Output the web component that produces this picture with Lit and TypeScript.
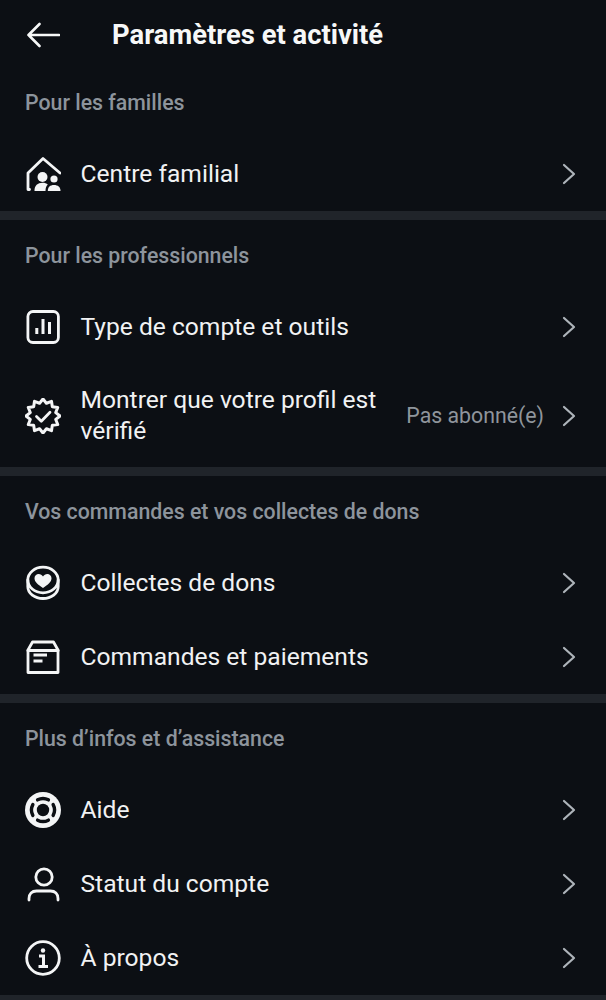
import { LitElement, html, css, svg } from "lit";
import { customElement } from "lit/decorators.js";

const FG = "#f4f5f6";
const BG = "#0c0f14";
const S = (inner: unknown) => html`<svg class="ic" viewBox="0 0 36 36" fill="none" stroke="${FG}" stroke-width="2.8" stroke-linecap="round" stroke-linejoin="round">${inner}</svg>`;

const seal = (() => {
  const pts: string[] = [];
  const n = 12;
  for (let i = 0; i < n * 2; i++) {
    const r = i % 2 === 0 ? 17 : 13.2;
    const a = (Math.PI * i) / n - Math.PI / 2;
    pts.push(`${(18 + r * Math.cos(a)).toFixed(2)},${(18 + r * Math.sin(a)).toFixed(2)}`);
  }
  return pts.join(" ");
})();

const icons = {
  family: S(svg`<path d="M4.500 33.500H3V17L18 2.500 35 17"/><circle cx="17.500" cy="21" r="5" fill="${FG}" stroke="none"/><path d="M9.500 35c0-5.500 3.200-8.200 8-8.200 2.300 0 4 .6 5.300 1.700-1.600 1.500-2.300 3.600-2.300 6.500z" fill="${FG}" stroke="none"/><circle cx="29" cy="23" r="3.600" fill="${FG}" stroke="none"/><path d="M22.800 35c0-4 2.300-6 6.200-6s6.500 2 6.500 6z" fill="${FG}" stroke="none"/>`),
  chart: S(svg`<rect x="2.900" y="2.500" width="30.500" height="31" rx="5"/><path d="M11.800 19v6M18 10v15M24.500 13v12" stroke-width="3" stroke-linecap="butt"/>`),
  badge: S(svg`<polygon points="${seal}" stroke-width="3"/><path d="M11.500 18.500l4.800 4.800 8.700-9"/>`),
  coin: S(svg`<ellipse cx="18" cy="15" rx="15.200" ry="12.800"/><path d="M2.800 15v6.500c0 7 7 12 15.200 12s15.200-5 15.200-12V15"/><path d="M18 23c-5-3.400-8.500-6-8.500-9.800 0-2.500 1.900-4.200 4.200-4.200 1.800 0 3.300 1 4.300 2.500 1-1.500 2.500-2.500 4.300-2.500 2.300 0 4.200 1.700 4.200 4.200 0 3.800-3.500 6.400-8.500 9.800z" fill="${FG}" stroke="none"/>`),
  box: S(svg`<path d="M3 11L7.500 3h21L33 11v22.500H3z"/><path d="M3 11.500h30" stroke-width="3"/><path d="M8.500 16h13.500M8.500 22h9" stroke-width="2.800" stroke-linecap="butt"/>`),
  ring: S(svg`<circle cx="18" cy="18" r="18" fill="${FG}" stroke="none"/><circle cx="18" cy="18" r="6.200" fill="${BG}" stroke="none"/><path d="M12.600 7.850A11.500 11.500 0 0 1 23.400 7.850M28.150 12.600A11.500 11.500 0 0 1 28.150 23.400M23.400 28.150A11.500 11.500 0 0 1 12.600 28.150M7.850 23.400A11.500 11.500 0 0 1 7.850 12.600" stroke="${BG}" stroke-width="3.400" stroke-linecap="round"/>`),
  user: S(svg`<circle cx="19" cy="11" r="8.200"/><path d="M4 34v-1.500c0-4.700 3-7.500 7.500-7.500h14c4.500 0 7.500 2.800 7.500 7.500V34"/>`),
  info: S(svg`<circle cx="18" cy="18" r="16.300"/><circle cx="18" cy="10.500" r="2.200" fill="${FG}" stroke="none"/><path d="M14 16h4.500v10M13.500 26.500h9.500" stroke-width="3" stroke-linecap="butt" stroke-linejoin="miter"/>`),
};

const chevron = html`<svg class="chev" viewBox="0 0 14 22" fill="none" stroke="#aeb4ba" stroke-width="2.200" stroke-linecap="round" stroke-linejoin="round"><path d="M2 2l10 9-10 9"/></svg>`;

type Row = { icon: unknown; label: string; tall?: boolean; value?: string };
type Section = { title: string; rows: Row[] };

const sections: Section[] = [
  { title: "Pour les familles", rows: [{ icon: icons.family, label: "Centre familial" }] },
  {
    title: "Pour les professionnels",
    rows: [
      { icon: icons.chart, label: "Type de compte et outils" },
      { icon: icons.badge, label: "Montrer que votre profil est vérifié", tall: true, value: "Pas abonné(e)" },
    ],
  },
  {
    title: "Vos commandes et vos collectes de dons",
    rows: [
      { icon: icons.coin, label: "Collectes de dons" },
      { icon: icons.box, label: "Commandes et paiements" },
    ],
  },
  {
    title: "Plus d’infos et d’assistance",
    rows: [
      { icon: icons.ring, label: "Aide" },
      { icon: icons.user, label: "Statut du compte" },
      { icon: icons.info, label: "À propos" },
    ],
  },
];

@customElement("app-root")
export class AppRoot extends LitElement {
  static styles = css`
    :host {
      display: block;
      height: 1000px;
      overflow: hidden;
      background: #0c0f14;
      color: #f4f5f6;
      font-family: Roboto, "Liberation Sans", sans-serif;
    }
    .top {
      height: 67px;
      padding: 3px 25px 0;
      box-sizing: border-box;
      display: flex;
      align-items: center;
      gap: 52px;
    }
    .back { width: 35px; height: 26px; flex: none; }
    .title { font-size: 27.4px; font-weight: 700; color: #f7f8f8; }
    .head {
      height: 70px;
      padding: 0 25px;
      display: flex;
      align-items: center;
      font-size: 21.3px;
      font-weight: 500;
      color: #8d949c;
    }
    .row {
      height: 74px;
      padding: 0 30px 0 25px;
      display: flex;
      align-items: center;
    }
    .row.tall { height: 103px; }
    .ic { width: 36px; height: 36px; flex: none; margin-right: 19.5px; }
    .label {
      flex: 1;
      font-size: 24.6px;
      line-height: 31px;
      padding-bottom: 2px;
      color: #f1f2f3;
    }
    .tall .label { max-width: 310px; }
    .value {
      margin-left: auto;
      margin-right: 18px;
      font-size: 21.3px;
      color: #8f959c;
    }
    .chev { width: 14px; height: 22px; flex: none; }
    .sep { height: 9px; background: #20242a; }
  `;

  render() {
    return html`
      <div class="top">
        <svg class="back" viewBox="0 0 35 26" fill="none" stroke="#f7f8f8" stroke-width="2.6" stroke-linecap="round" stroke-linejoin="round"><path d="M34 13H3.500M14.500 2L3.500 13l11 11"/></svg>
        <div class="title">Paramètres et activité</div>
      </div>
      ${sections.map(
        (s) => html`
          <div class="head">${s.title}</div>
          ${s.rows.map(
            (r) => html`
              <div class="row ${r.tall ? "tall" : ""}">
                ${r.icon}
                <div class="label">${r.label}</div>
                ${r.value ? html`<div class="value">${r.value}</div>` : ""}
                ${chevron}
              </div>
            `
          )}
          <div class="sep"></div>
        `
      )}
    `;
  }
}
